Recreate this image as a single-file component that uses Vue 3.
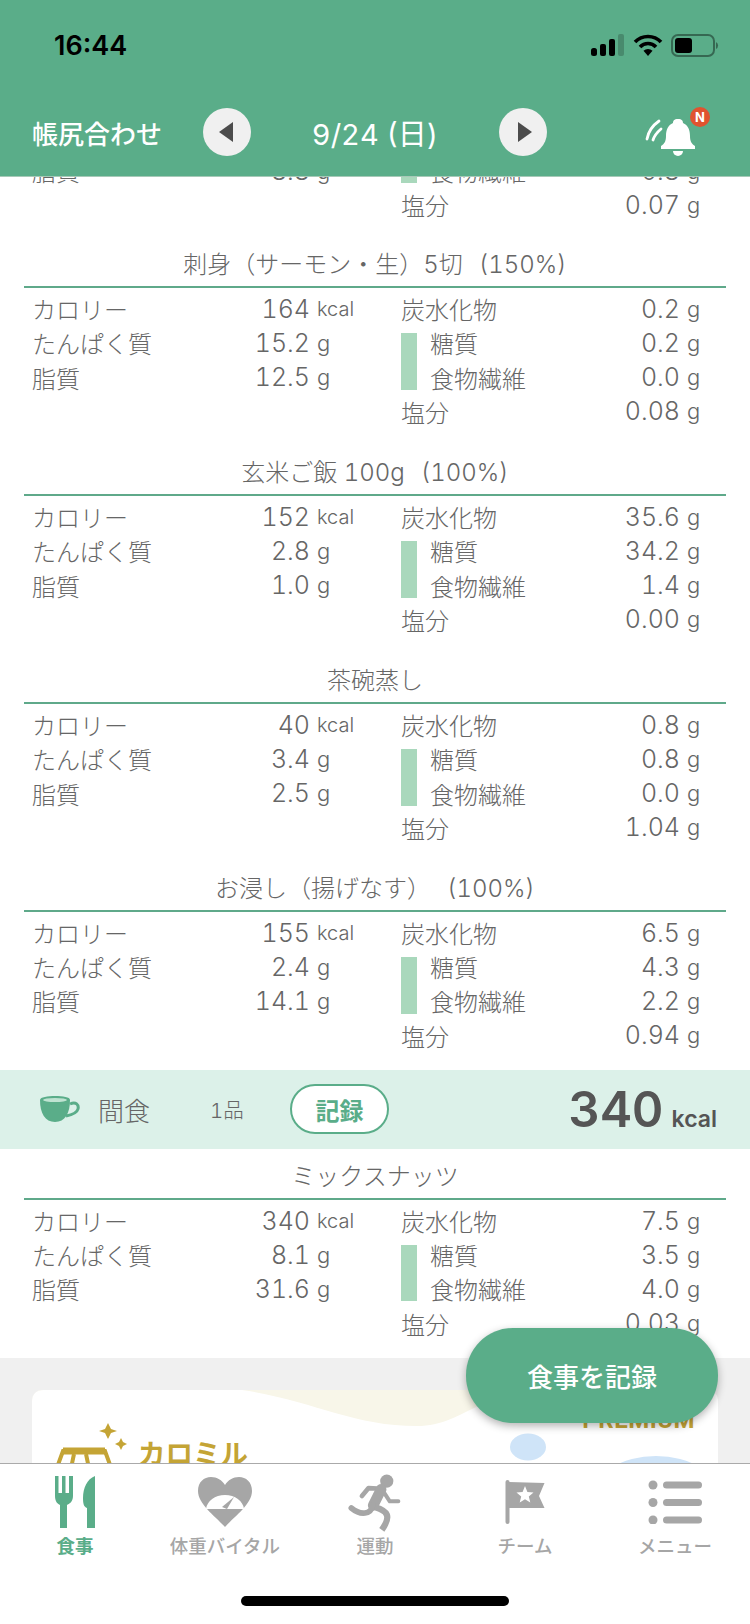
<template>
  <div class="phone">
    <header class="header">
      <div class="status">
        <span class="time">16:44</span>
        <div class="status-icons">
          <svg width="34" height="22" viewBox="0 0 34 22">
            <rect x="1" y="14" width="6" height="8" rx="2.5" fill="#000" />
            <rect x="10" y="10" width="6" height="12" rx="2" fill="#000" />
            <rect x="19" y="5" width="6" height="17" rx="2" fill="#000" />
            <rect x="28" y="0" width="6" height="22" rx="2" fill="#000" opacity="0.2" />
          </svg>
          <svg width="30" height="22" viewBox="0 0 30 22">
            <path d="M2 8 A18 18 0 0 1 28 8" fill="none" stroke="#000" stroke-width="3.6" />
            <path d="M7 13 A11 11 0 0 1 23 13" fill="none" stroke="#000" stroke-width="3.6" />
            <path d="M15 22 L10.500 16.800 A6.500 6.500 0 0 1 19.500 16.800 Z" fill="#000" />
          </svg>
          <svg width="48" height="23" viewBox="0 0 48 23">
            <rect x="1" y="1" width="42" height="21" rx="6" fill="none" stroke="#000" stroke-opacity="0.4" stroke-width="2" />
            <rect x="4" y="4" width="17" height="15" rx="3" fill="#000" />
            <path d="M45 8 a4 4 0 0 1 0 7 Z" fill="#000" fill-opacity="0.4" />
          </svg>
        </div>
      </div>
      <div class="nav">
        <span class="nav-title">帳尻合わせ</span>
        <button class="arrow arrow-prev"><i class="tri tri-left"></i></button>
        <span class="nav-date">9/24 (日)</span>
        <button class="arrow arrow-next"><i class="tri tri-right"></i></button>
        <div class="bell">
          <svg width="54" height="42" viewBox="0 0 54 42">
            <path d="M2 24 Q4 13 14 6 M8 25 Q10 19 16 14" fill="none" stroke="#fff" stroke-width="2.800" stroke-linecap="round" />
            <path d="M33 4 C37 4 38 6 38 8 C43 10 45 15 45 21 C45 27 47 29 50 31 L50 34 L16 34 L16 31 C19 29 21 27 21 21 C21 15 23 10 28 8 C28 6 29 4 33 4 Z" fill="#fff" />
            <path d="M28 36 L38 36 A5 5 0 0 1 28 36 Z" fill="#fff" />
          </svg>
          <span class="badge">N</span>
        </div>
      </div>
    </header>

    <main class="content">
      <div class="scroll">
        <section class="foods">
          <div class="food food-partial">
            <div class="grid">
              <div class="col col-left">
                <div class="row">
                  <span class="label">脂質</span><span class="num">8.8</span><span class="unit">g</span>
                </div>
              </div>
              <div class="col col-right">
                <div class="sub">
                  <i class="sub-bar"></i>
                  <div class="sub-rows">
                    <div class="row">
                      <span class="label">食物繊維</span><span class="num">0.8</span><span class="unit">g</span>
                    </div>
                  </div>
                </div>
                <div class="row">
                  <span class="label">塩分</span><span class="num">0.07</span><span class="unit">g</span>
                </div>
              </div>
            </div>
          </div>

          <div v-for="food in foods" :key="food.name" class="food">
            <h3 class="food-title">{{ food.name }}<span v-if="food.pct" class="pct">{{ food.pct }}</span></h3>
            <div class="grid">
              <div class="col col-left">
                <div class="row">
                  <span class="label">カロリー</span><span class="num">{{ food.kcal }}</span><span class="unit unit-kcal">kcal</span>
                </div>
                <div class="row">
                  <span class="label">たんぱく質</span><span class="num">{{ food.protein }}</span><span class="unit">g</span>
                </div>
                <div class="row">
                  <span class="label">脂質</span><span class="num">{{ food.fat }}</span><span class="unit">g</span>
                </div>
              </div>
              <div class="col col-right">
                <div class="row">
                  <span class="label">炭水化物</span><span class="num">{{ food.carb }}</span><span class="unit">g</span>
                </div>
                <div class="sub">
                  <i class="sub-bar"></i>
                  <div class="sub-rows">
                    <div class="row">
                      <span class="label">糖質</span><span class="num">{{ food.sugar }}</span><span class="unit">g</span>
                    </div>
                    <div class="row">
                      <span class="label">食物繊維</span><span class="num">{{ food.fiber }}</span><span class="unit">g</span>
                    </div>
                  </div>
                </div>
                <div class="row">
                  <span class="label">塩分</span><span class="num">{{ food.salt }}</span><span class="unit">g</span>
                </div>
              </div>
            </div>
          </div>
        </section>

        <div class="meal-bar">
          <svg class="cup" width="40" height="26" viewBox="0 0 40 26">
            <path d="M0 4 C0 1 8 0 15 0 C23 0 30 1 30 4 C30 17 25 26 15 26 C5 26 0 17 0 4 Z" fill="#5aad89" />
            <ellipse cx="15" cy="4" rx="12" ry="2" fill="#bfe3d2" />
            <path d="M30 8 C36 5 39 9 38 13 C37 17 31 19 26 20" fill="none" stroke="#5aad89" stroke-width="3" />
          </svg>
          <span class="meal-name">間食</span>
          <span class="meal-count">1品</span>
          <button class="record-btn">記録</button>
          <span class="meal-kcal">340<small>kcal</small></span>
        </div>

        <section class="foods foods-snack">
          <div class="food">
            <h3 class="food-title">ミックスナッツ</h3>
            <div class="grid">
              <div class="col col-left">
                <div class="row"><span class="label">カロリー</span><span class="num">340</span><span class="unit unit-kcal">kcal</span></div>
                <div class="row"><span class="label">たんぱく質</span><span class="num">8.1</span><span class="unit">g</span></div>
                <div class="row"><span class="label">脂質</span><span class="num">31.6</span><span class="unit">g</span></div>
              </div>
              <div class="col col-right">
                <div class="row"><span class="label">炭水化物</span><span class="num">7.5</span><span class="unit">g</span></div>
                <div class="sub">
                  <i class="sub-bar"></i>
                  <div class="sub-rows">
                    <div class="row"><span class="label">糖質</span><span class="num">3.5</span><span class="unit">g</span></div>
                    <div class="row"><span class="label">食物繊維</span><span class="num">4.0</span><span class="unit">g</span></div>
                  </div>
                </div>
                <div class="row"><span class="label">塩分</span><span class="num">0.03</span><span class="unit">g</span></div>
              </div>
            </div>
          </div>
        </section>

        <div class="promo-wrap">
          <div class="promo">
            <svg class="promo-art" width="686" height="80" viewBox="0 0 686 80">
              <path d="M0 12 Q0 0 12 0 L210 0 C280 10 320 36 385 36 C410 36 425 26 450 14 L686 0 L0 0 Z" fill="#f8f6e9" />
              <ellipse cx="496" cy="57" rx="18" ry="13.500" fill="#cfe4f8" />
              <ellipse cx="624" cy="106" rx="63" ry="40" fill="#cfe4f8" />
              <ellipse cx="426" cy="83" rx="20" ry="10" fill="#cfe4f8" />
            </svg>
            <span class="premium">PREMIUM</span>
            <div class="logo">
              <svg width="74" height="50" viewBox="0 0 74 50">
                <path d="M54 0 L57 6 L63 8 L57 10 L54 16 L51 10 L45 8 L51 6 Z" fill="#c4a435" />
                <path d="M67 15 L69 19 L73 21 L69 23 L67 27 L65 23 L61 21 L65 19 Z" fill="#c4a435" />
                <path d="M1 50 L9 28 L51 28 L59 50 M20 31 L16 50 M32 31 L36 50" fill="none" stroke="#c4a435" stroke-width="4" />
                <path d="M9 28 L51 28" fill="none" stroke="#c4a435" stroke-width="7" />
              </svg>
              <span class="logo-text">カロミル</span>
            </div>
          </div>
        </div>
      </div>
    </main>

    <button class="fab">食事を記録</button>

    <nav class="tabbar">
      <div class="tabs">
        <div class="tab tab-active">
          <div class="tab-icon">
            <svg width="42" height="52" viewBox="0 0 42 52">
              <path d="M1 0 L4.500 0 L4.500 17 L8 17 L8 0 L11.500 0 L11.500 17 L15 17 L15 0 L19 0 L19 20 C19 26 15 28 13 29 L13 52 L6 52 L6 29 C4 28 1 26 1 20 Z" fill="#5aad89" />
              <path d="M41 0 L41 52 L33 52 L33 32 C30 31 29 28 29 22 C29 12 33 3 41 0 Z" fill="#5aad89" />
            </svg>
          </div>
          <span class="tab-label">食事</span>
        </div>
        <div class="tab">
          <div class="tab-icon">
            <svg width="56" height="52" viewBox="0 0 56 52">
              <path d="M28 51 C18 40 1 28 1 15 C1 6 7 1 14 1 C20 1 25 4 28 9 C31 4 36 1 42 1 C49 1 55 6 55 15 C55 28 38 40 28 51 Z" fill="#a6a6a6" />
              <path d="M9 33 C10 25 18 19 28 19 C38 19 46 25 47 33 Z" fill="#fff" />
              <path d="M25 31 L37 21 L30 33 Z" fill="#a6a6a6" />
            </svg>
          </div>
          <span class="tab-label">体重バイタル</span>
        </div>
        <div class="tab">
          <div class="tab-icon">
            <svg width="58" height="60" viewBox="40 18 175 180">
              <circle cx="163" cy="45" r="20" fill="#a6a6a6" />
              <path d="M148 68 L108 66 L88 90" fill="none" stroke="#a6a6a6" stroke-width="14" stroke-linecap="round" stroke-linejoin="round" />
              <path d="M150 72 L172 106 L198 106" fill="none" stroke="#a6a6a6" stroke-width="12" stroke-linecap="round" stroke-linejoin="round" />
              <path d="M146 70 L122 118" fill="none" stroke="#a6a6a6" stroke-width="32" stroke-linecap="round" />
              <path d="M120 118 C116 145 85 150 56 126" fill="none" stroke="#a6a6a6" stroke-width="17" stroke-linecap="round" />
              <path d="M128 124 C165 135 178 150 148 192" fill="none" stroke="#a6a6a6" stroke-width="19" />
            </svg>
          </div>
          <span class="tab-label">運動</span>
        </div>
        <div class="tab">
          <div class="tab-icon">
            <svg width="40" height="46" viewBox="0 0 40 46">
              <rect x="0.500" y="1" width="4" height="44" rx="2" fill="#a6a6a6" />
              <path d="M4 3 L39.500 4 L34 17 L39.500 29 L4 29 Z" fill="#a6a6a6" />
              <path d="M20 7 L22.400 13 L28.500 13.400 L23.800 17.400 L25.300 23.500 L20 20.200 L14.700 23.500 L16.200 17.400 L11.500 13.400 L17.600 13 Z" fill="#fff" />
            </svg>
          </div>
          <span class="tab-label">チーム</span>
        </div>
        <div class="tab">
          <div class="tab-icon">
            <svg width="54" height="44" viewBox="0 0 54 44">
              <circle cx="5" cy="5" r="4.500" fill="#a6a6a6" />
              <circle cx="5" cy="22.500" r="4.500" fill="#a6a6a6" />
              <circle cx="5" cy="40" r="4.500" fill="#a6a6a6" />
              <rect x="15" y="1.500" width="39" height="7" rx="3.500" fill="#a6a6a6" />
              <rect x="15" y="19" width="39" height="7" rx="3.500" fill="#a6a6a6" />
              <rect x="15" y="36.500" width="39" height="7" rx="3.500" fill="#a6a6a6" />
            </svg>
          </div>
          <span class="tab-label">メニュー</span>
        </div>
      </div>
      <div class="home-indicator"></div>
    </nav>
  </div>
</template>

<script setup>
const foods = [
  { name: '刺身（サーモン・生）5切', pct: '(150%)', kcal: '164', protein: '15.2', fat: '12.5', carb: '0.2', sugar: '0.2', fiber: '0.0', salt: '0.08' },
  { name: '玄米ご飯 100g', pct: '(100%)', kcal: '152', protein: '2.8', fat: '1.0', carb: '35.6', sugar: '34.2', fiber: '1.4', salt: '0.00' },
  { name: '茶碗蒸し', pct: '', kcal: '40', protein: '3.4', fat: '2.5', carb: '0.8', sugar: '0.8', fiber: '0.0', salt: '1.04' },
  { name: 'お浸し（揚げなす）', pct: '(100%)', kcal: '155', protein: '2.4', fat: '14.1', carb: '6.5', sugar: '4.3', fiber: '2.2', salt: '0.94' },
];
</script>

<style>
html,
body {
  margin: 0;
  background: #fff;
}
</style>

<style scoped>
.phone {
  position: relative;
  display: flex;
  flex-direction: column;
  width: 750px;
  height: 1624px;
  overflow: hidden;
  background: #fff;
  color: #666;
  font-family: Inter, "Noto Sans CJK JP", sans-serif;
  font-weight: 300;
  font-variant-numeric: tabular-nums;
}

.header {
  flex: none;
  height: 177px;
  box-sizing: border-box;
  background: #5aad89;
  border-bottom: 1px solid #a7c9b8;
  z-index: 2;
}

.status {
  display: flex;
  align-items: center;
  justify-content: space-between;
  height: 90px;
  padding: 0 31px 0 54px;
}

.time {
  font-size: 27px;
  font-weight: 600;
  color: #000;
  font-variant-numeric: normal;
}

.status-icons {
  display: flex;
  align-items: center;
  gap: 8.500px;
}

.nav {
  position: relative;
  display: flex;
  align-items: center;
  height: 84px;
  padding-left: 32px;
  color: #fff;
}

.nav-title {
  width: 171px;
  font-size: 26px;
  font-weight: 500;
}

.arrow {
  display: flex;
  align-items: center;
  justify-content: center;
  width: 48px;
  height: 48px;
  padding: 0;
  border: 0;
  border-radius: 50%;
  background: #f0f0f0;
}

.tri {
  display: block;
  width: 0;
  height: 0;
  border-top: 10px solid transparent;
  border-bottom: 10px solid transparent;
}

.tri-left {
  border-right: 14px solid #4c4c4c;
  margin-right: 3px;
}

.tri-right {
  border-left: 14px solid #4c4c4c;
  margin-left: 3px;
}

.nav-date {
  width: 248px;
  text-align: center;
  font-size: 29px;
  font-weight: 400;
}

.bell {
  position: absolute;
  left: 645px;
  top: 25px;
  width: 54px;
  height: 42px;
}

.bell svg {
  display: block;
}

.badge {
  position: absolute;
  left: 45px;
  top: -8px;
  width: 20px;
  height: 20px;
  box-sizing: content-box;
  border-radius: 50%;
  background: #e0532f;
  color: #fff;
  font-size: 13px;
  font-weight: 700;
  line-height: 20px;
  text-align: center;
}

.content {
  flex: 1;
  min-height: 0;
  overflow: hidden;
}

.scroll {
  margin-top: -22px;
}

.foods {
  display: flex;
  flex-direction: column;
  gap: 4px;
}

.food {
  padding: 0 24px 16.200px;
}

.food-partial {
  padding-bottom: 14.800px;
}

.food-title {
  margin: 0;
  height: 44px;
  border-bottom: 2px solid #5fa98a;
  font-size: 24px;
  font-weight: 300;
  line-height: 46px;
  text-align: center;
}

.pct {
  margin-left: 16px;
}

.grid {
  display: flex;
  padding-top: 5px;
}

.food-partial .grid {
  padding-top: 0;
}

.col {
  display: flex;
  flex-direction: column;
}

.col-left {
  width: 369px;
  padding-left: 8px;
}

.col-right {
  width: 297px;
}

.row {
  display: flex;
  align-items: center;
  height: 34.200px;
  box-sizing: border-box;
  padding-bottom: 3px;
  font-size: 24px;
}

.label {
  flex: 1;
  white-space: nowrap;
}

.num {
  font-size: 25px;
  text-align: right;
}

.unit {
  margin-left: 7px;
  width: 11px;
  font-size: 22px;
}

.col-left .unit {
  width: 84px;
}

.unit-kcal {
  font-size: 20px;
}

.sub {
  display: flex;
}

.sub-bar {
  flex: none;
  width: 16px;
  margin: 6px 13px 6px 0;
  background: #a9d8bc;
}

.sub-rows {
  flex: 1;
}

.meal-bar {
  display: flex;
  align-items: center;
  height: 79px;
  padding: 0 33px 0 40px;
  background: #dcf1e9;
}

.cup {
  flex: none;
}

.meal-name {
  width: 112px;
  margin-left: 18px;
  font-size: 26px;
}

.meal-count {
  width: 80px;
  font-size: 20.500px;
}

.record-btn {
  width: 99px;
  height: 50px;
  box-sizing: border-box;
  border: 2px solid #5aad89;
  border-radius: 25px;
  background: #fff;
  color: #5aad89;
  font-family: inherit;
  font-size: 24px;
  font-weight: 700;
  padding: 0;
}

.meal-kcal {
  margin-left: auto;
  color: #555;
  font-size: 49px;
  font-weight: 600;
}

.meal-kcal small {
  margin-left: 8px;
  font-size: 23px;
}

.foods-snack .food {
  padding-top: 5px;
}

.promo-wrap {
  height: 200px;
  padding: 32px 32px 0;
  background: #f0f0f0;
}

.promo {
  position: relative;
  height: 200px;
  overflow: hidden;
  border-radius: 10px 10px 0 0;
  background: #fff;
}

.promo-art {
  position: absolute;
  left: 0;
  top: 0;
}

.premium {
  position: absolute;
  right: 23px;
  top: 16px;
  color: #c4a435;
  font-family: Roboto, sans-serif;
  font-size: 24px;
  font-weight: 700;
  letter-spacing: 0.5px;
}

.logo {
  position: relative;
  display: flex;
  align-items: flex-start;
  padding: 33px 0 0 22px;
}

.logo-text {
  margin: 14px 0 0 10px;
  color: #c4a435;
  font-size: 27.500px;
  font-weight: 700;
  line-height: 34px;
}

.fab {
  position: absolute;
  left: 466px;
  top: 1328px;
  width: 252px;
  height: 95px;
  padding: 0;
  border: 0;
  border-radius: 47px;
  background: #5aad89;
  color: #fff;
  font-family: inherit;
  font-size: 26px;
  font-weight: 500;
  box-shadow: 0 3px 8px rgba(0, 0, 0, 0.3);
  z-index: 3;
}

.tabbar {
  flex: none;
  position: relative;
  height: 161px;
  box-sizing: border-box;
  border-top: 1px solid #aaa;
  background: #fff;
  z-index: 2;
}

.tabs {
  display: flex;
  padding-top: 9px;
}

.tab {
  flex: 1;
  display: flex;
  flex-direction: column;
  align-items: center;
}

.tab-icon {
  display: flex;
  align-items: center;
  justify-content: center;
  height: 57px;
}

.tab-label {
  margin-top: 3px;
  color: #a6a6a6;
  font-size: 18.500px;
  font-weight: 500;
  line-height: 26px;
}

.tab-active .tab-label {
  color: #5aad89;
  font-weight: 700;
}

.home-indicator {
  width: 268px;
  height: 10px;
  margin: 37px auto 0;
  border-radius: 5px;
  background: #000;
}
</style>
